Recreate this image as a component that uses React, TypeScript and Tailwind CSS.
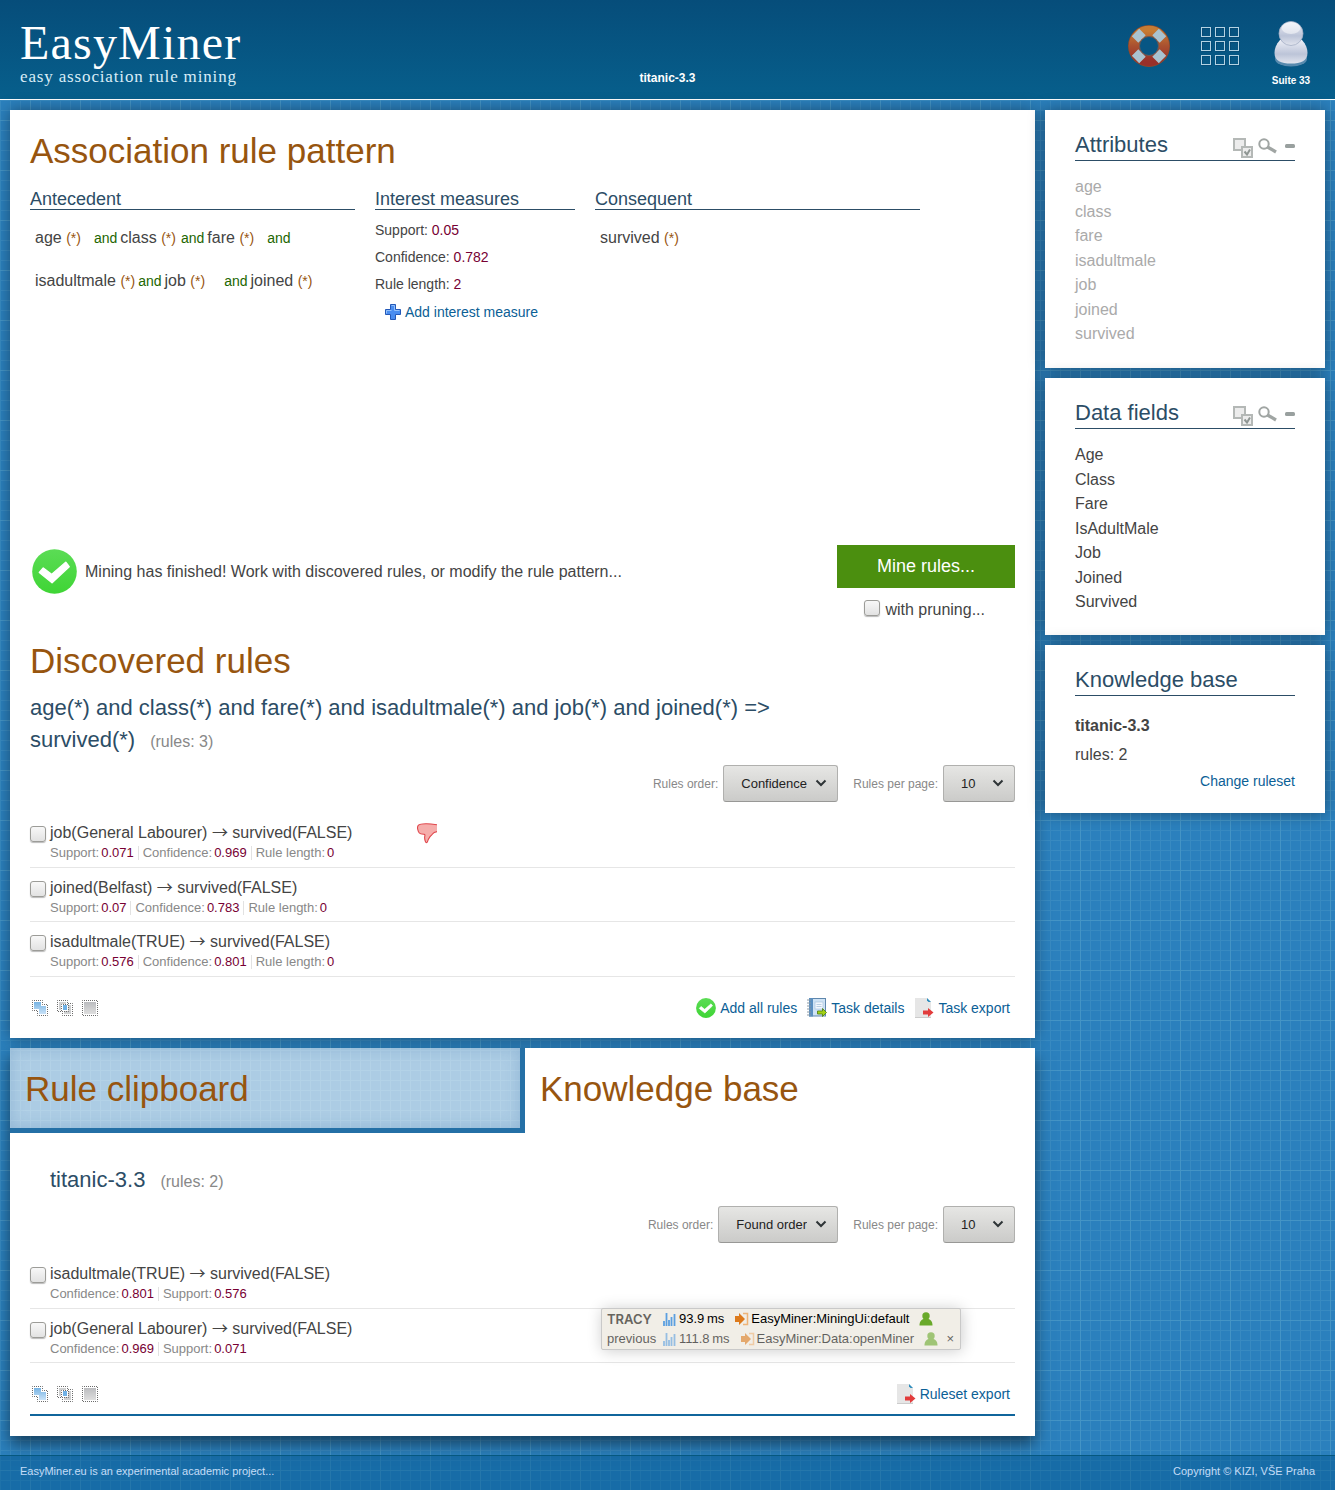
import React from "react";

type Measure = [string, string];

function CheckCircle({ size }: { size: number }) {
  return (
    <svg width={size} height={size} viewBox="0 0 46 46" aria-hidden="true" className="shrink-0">
      <defs>
        <linearGradient id="okFill" x1="0" y1="0" x2="0" y2="1">
          <stop offset="0" stopColor="#5bdc55" />
          <stop offset="1" stopColor="#3fd535" />
        </linearGradient>
      </defs>
      <circle cx="23" cy="23" r="22.8" fill="url(#okFill)" />
      <path d="M7.5 24l4-4.500 8.500 6.500L34.500 13.500l3.500 4.500L20.500 34.500z" fill="#fff" stroke="#fff" strokeWidth="1.500" strokeLinejoin="round" />
    </svg>
  );
}

function LifeRing() {
  return (
    <svg width="44" height="44" viewBox="0 0 44 44" aria-hidden="true">
      <defs>
        <linearGradient id="ring" x1="0" y1="0" x2="0" y2="1">
          <stop offset="0" stopColor="#c67b33" />
          <stop offset="0.500" stopColor="#a95030" />
          <stop offset="1" stopColor="#98302a" />
        </linearGradient>
      </defs>
      <circle cx="22" cy="22" r="15" fill="none" stroke="#8d4a2b" strokeWidth="12" />
      <circle cx="22" cy="22" r="15" fill="none" stroke="url(#ring)" strokeWidth="10.500" />
      <g stroke="#a9c3d0" strokeWidth="10.500">
        <path d="M15 15L8.500 8.500M29 15l6.500-6.500M15 29l-6.500 6.500M29 29l6.500 6.500" />
      </g>
      <circle cx="22" cy="22" r="9.500" fill="#075684" stroke="#6e5a55" strokeWidth="1" />
    </svg>
  );
}

function AppsGrid() {
  const at = [0, 14, 28];
  return (
    <svg width="40" height="40" viewBox="0 0 40 40" aria-hidden="true">
      {at.map((y) =>
        at.map((x) => (
          <g key={`${x}-${y}`} fill="none">
            <rect x={x + 1.5} y={y + 1.5} width="9" height="9" stroke="#03426b" strokeOpacity="0.500" />
            <rect x={x + 0.5} y={y + 0.5} width="9" height="9" stroke="#b4d2e2" />
          </g>
        ))
      )}
    </svg>
  );
}

function UserFigure() {
  return (
    <svg width="36" height="48" viewBox="0 0 36 48" aria-hidden="true">
      <defs>
        <linearGradient id="fig" x1="0" y1="0" x2="0" y2="1">
          <stop offset="0" stopColor="#eceef6" />
          <stop offset="0.600" stopColor="#bcc4d8" />
          <stop offset="1" stopColor="#e2e5ee" />
        </linearGradient>
      </defs>
      <ellipse cx="18" cy="39" rx="16" ry="7.500" fill="#7ba0bf" opacity="0.700" />
      <path d="M7 20h22c4 4 5.500 9 5.500 13 0 8-6.500 10.500-16.500 10.500S1.500 41 1.500 33c0-4 1.500-9 5.500-13z" fill="url(#fig)" />
      <circle cx="18" cy="13.500" r="12" fill="url(#fig)" stroke="#a4aec5" strokeWidth="0.800" />
      <ellipse cx="18" cy="8" rx="9.500" ry="6" fill="#fff" opacity="0.500" />
    </svg>
  );
}

function PlusIcon() {
  return (
    <svg width="16" height="16" viewBox="0 0 16 16" aria-hidden="true">
      <path d="M5.500.5h5v5h5v5h-5v5h-5v-5h-5v-5h5z" fill="#4a8df0" stroke="#2459b8" />
      <path d="M6.500 1.500h3v5h5M1.500 9.500v-3h5" fill="none" stroke="#93c1fb" />
    </svg>
  );
}

function SelectBoxesIcon() {
  return (
    <svg width="20" height="20" viewBox="0 0 20 20" fill="#ececec" stroke="#b4b8b6" strokeWidth="2" aria-hidden="true">
      <rect x="1" y="1" width="11" height="11" />
      <rect x="9" y="9" width="10" height="10" />
      <path d="M11.500 13.500l2.500 3 3-5" fill="none" stroke="#8f9693" />
    </svg>
  );
}

function SearchIcon() {
  return (
    <svg width="20" height="16" viewBox="0 0 20 16" fill="none" stroke="#a0a5a3" aria-hidden="true">
      <circle cx="6" cy="6" r="4.700" strokeWidth="2" />
      <path d="M9.500 9l8.500 5" strokeWidth="3.200" />
    </svg>
  );
}

function MinusIcon() {
  return (
    <svg width="10" height="4" viewBox="0 0 10 4" aria-hidden="true">
      <rect width="10" height="4" rx="1.500" fill="#99a09f" />
    </svg>
  );
}

function ThumbDown() {
  return (
    <svg width="20" height="21" viewBox="0 0 20 21" aria-hidden="true">
      <path
        d="M20 1.800C16 1.200 13 .8 9.500.8 6 .8 3 .7 1.500 2.200.6 3.200.3 5 .8 6.500 1 8 1.500 9 2.300 10c1 1.300 3 1.200 4.700 1.200 1.300.1.900 1.300.7 2.500-.2 1.600 0 3.300.8 5 .3 1.300 1.600 1.300 2-.1.400-1.500.9-2.600 1.900-4 1-1.500 2.300-2.300 3.100-3.600C16.500 9.500 18 9 20 8.600"
        fill="#f5adab" stroke="#e0474c" strokeWidth="1.100"
      />
    </svg>
  );
}

function UnionIcon() {
  return (
    <svg width="16" height="16" viewBox="0 0 16 16" aria-hidden="true">
      <defs>
        <linearGradient id="blueUnion" x1="0" y1="0" x2="0" y2="1">
          <stop offset="0" stopColor="#76b3e3" />
          <stop offset="1" stopColor="#c9e2f8" />
        </linearGradient>
      </defs>
      <path d="M2 2h7v4h5v8H7V9H2z" fill="url(#blueUnion)" />
      <path d="M.5.500h10v4h5v11h-10v-5h-5z" fill="none" stroke="#6b6b6b" strokeDasharray="1 1" strokeDashoffset="0.500" />
    </svg>
  );
}

function IntersectIcon() {
  return (
    <svg width="16" height="16" viewBox="0 0 16 16" aria-hidden="true">
      <path d="M2 2h7v3h5v9H7V10H2z" fill="#cfd0d1" />
      <rect x="4" y="4" width="7" height="7" fill="#fff" />
      <rect x="6" y="5" width="4" height="5" fill="#6fb1e6" />
      <path d="M.5.500h10v3h5v12h-10v-4h-5zM4.500 4.500h7v7h-7z" fill="none" stroke="#6b6b6b" strokeDasharray="1 1" strokeDashoffset="0.500" />
    </svg>
  );
}

function SquareIcon() {
  return (
    <svg width="16" height="16" viewBox="0 0 16 16" aria-hidden="true">
      <defs>
        <linearGradient id="greySquare" x1="0" y1="0" x2="0" y2="1">
          <stop offset="0" stopColor="#bbbcbf" />
          <stop offset="1" stopColor="#dedede" />
        </linearGradient>
      </defs>
      <rect x="2" y="2" width="12" height="12" fill="url(#greySquare)" />
      <rect x="0.500" y="0.500" width="15" height="15" fill="none" stroke="#6b6b6b" strokeDasharray="1 1" strokeDashoffset="0.500" />
    </svg>
  );
}

function NotebookIcon() {
  return (
    <svg width="20" height="20" viewBox="0 0 20 20" aria-hidden="true">
      <rect x="2.500" y="0.500" width="16" height="17.500" fill="#cfe3f5" stroke="#5f87ad" />
      <rect x="2" y="0" width="4" height="18.500" fill="#5b8fc0" />
      <rect x="8" y="4" width="8" height="7" fill="#f3f8fd" stroke="#a8c4de" strokeWidth="0.700" />
      <path d="M9.500 6.500h5M9.500 8.500h5" stroke="#b9cfe4" />
      <path d="M0 2h4M0 5h4M0 8h4M0 11h4M0 14h4M0 17h4" stroke="#8898a5" />
      <path d="M10.500 13h5v-2.500l4 4-4 4V16h-5z" fill="#a3d215" stroke="#558317" strokeWidth="0.900" />
    </svg>
  );
}

function ExportIcon() {
  return (
    <svg width="20" height="20" viewBox="0 0 20 20" aria-hidden="true">
      <path d="M1 0h12l4 4v16H1z" fill="#e6e6e6" />
      <path d="M1 19.500h16" stroke="#cccccc" />
      <path d="M13 0l4 4h-2.500L13 2.500z" fill="#2e8dbd" />
      <path d="M9 12.500h5V10l5.500 4.500L14 19v-2.500H9z" fill="#e23c3c" />
    </svg>
  );
}

function Box({ label, id }: { label?: string; id?: string }) {
  return (
    <input
      type="checkbox"
      id={id}
      aria-label={label}
      className="size-4 shrink-0 appearance-none rounded-[3px] border border-[#9c9c98] bg-linear-to-b from-[#f8f8f8] to-[#e2e2e2] shadow-[0_1px_1px_#bbbbbb] checked:bg-[#2b80bd]"
    />
  );
}

function Picker({ id, label, options }: { id: string; label: string; options: string[] }) {
  return (
    <div className="flex items-center gap-[5px]">
      <label htmlFor={id} className="text-xs text-[#888888]">{label}</label>
      <div className="relative">
        <select
          id={id}
          className="h-[37px] min-w-[72px] appearance-none rounded-[3px] border border-[#b0b0ae] border-b-[#989896] bg-linear-to-b from-[#e6e6e4] to-[#cbcbc9] pr-[30px] pl-[17px] text-[13px] text-[#222222]"
        >
          {options.map((o) => <option key={o}>{o}</option>)}
        </select>
        <svg width="12" height="8" viewBox="0 0 12 8" className="pointer-events-none absolute top-3.5 right-[11px]" aria-hidden="true">
          <path d="M1.500 1.500L6 6l4.500-4.500" fill="none" stroke="#2e3436" strokeWidth="2" />
        </svg>
      </div>
    </div>
  );
}

function RuleRow({ from, to, measures, thumb }: { from: string; to: string; measures: Measure[]; thumb?: boolean }) {
  return (
    <li className="flex items-start gap-1 border-b border-[#e6e6e6] pb-[5px] odd:pb-1.5">
      <span className="flex pt-[13px]"><Box label={`${from} → ${to}`} /></span>
      <div className="min-w-0 pt-2">
        <div className="flex h-6 items-center">
          <span className="text-base leading-6">
            {from} <span className="font-['Noto_Sans_CJK_JP',sans-serif] leading-none">→</span> {to}
          </span>
          {thumb && <span className="ml-[65px]"><ThumbDown /></span>}
        </div>
        <div className="flex items-center gap-1 text-[13px] leading-4">
          {measures.map(([name, value], i) => (
            <React.Fragment key={name}>
              {i > 0 && <span className="h-3.5 w-px bg-[#e2e2e2]" />}
              <span className="flex gap-0.5">
                <span className="text-[#888888]">{name}:</span>
                <span className="text-[#770033]">{value}</span>
              </span>
            </React.Fragment>
          ))}
        </div>
      </div>
    </li>
  );
}

function SelectionTools() {
  return (
    <div className="flex gap-[9px] pl-0.5">
      <button type="button" aria-label="Select all"><UnionIcon /></button>
      <button type="button" aria-label="Invert selection"><IntersectIcon /></button>
      <button type="button" aria-label="Select none"><SquareIcon /></button>
    </div>
  );
}

function ActionLink({ icon, children }: { icon: React.ReactNode; children: React.ReactNode }) {
  return (
    <a href="#" className="flex items-center gap-1 text-sm text-[#0b6096]">
      {icon}
      <span>{children}</span>
    </a>
  );
}

function Attr({ name }: { name: string }) {
  return (
    <span>
      {name} <span className="text-sm text-[#97550f]">(*)</span>
    </span>
  );
}

function And({ children }: { children?: React.ReactNode }) {
  return (
    <span className="flex items-center gap-[3px]">
      <span className="text-sm text-[#226600]">and</span>
      {children}
    </span>
  );
}

function SideTitle({ children, tools }: { children: React.ReactNode; tools?: boolean }) {
  return (
    <div className="flex items-center justify-between border-b border-[#2c4d66]">
      <h2 className="text-[22px] leading-[30px] text-[#2c4d66]">{children}</h2>
      {tools && (
        <div className="flex items-center gap-[5px] pt-0.5">
          <button type="button" aria-label="Select" className="pt-1"><SelectBoxesIcon /></button>
          <button type="button" aria-label="Search"><SearchIcon /></button>
          <button type="button" aria-label="Collapse" className="flex h-4 w-3 items-center justify-end"><MinusIcon /></button>
        </div>
      )}
    </div>
  );
}

function SideList({ items }: { items: string[] }) {
  return (
    <ul className="pt-3.5 text-base leading-6">
      {items.map((i) => <li key={i} className="odd:pb-px">{i}</li>)}
    </ul>
  );
}

function TracyRow({ first, time, action }: { first: React.ReactNode; time: string; action: string }) {
  return (
    <>
      <span className="w-14">{first}</span>
      <svg width="13" height="14" viewBox="0 0 13 14" aria-hidden="true">
        <path d="M1 14V9M3.500 14V1M6 14V8M8.500 14V5M11.500 14V2" stroke="#5b9fe0" strokeWidth="1.800" />
      </svg>
      <span className="ml-[3px]">{time}</span>
      <svg width="14" height="14" viewBox="0 0 14 14" className="ml-[11px]" aria-hidden="true">
        <path d="M0 4h4V1l6 6-6 6v-3H0z" fill="#dd7a1c" />
        <path d="M8 1.500h4.500v11H8" fill="none" stroke="#eeb478" strokeWidth="1.500" />
      </svg>
      <span className="ml-0.5">{action}</span>
      <svg width="14" height="14" viewBox="0 0 14 14" className="ml-2.5" aria-hidden="true">
        <circle cx="7" cy="4" r="3.700" fill="#69a92a" />
        <path d="M.5 13.500c0-4 2-6 4-6.500h5c2 .5 4 2.500 4 6.500z" fill="#69a92a" />
      </svg>
    </>
  );
}

function TracyBar() {
  return (
    <aside className="absolute right-[74px] bottom-[86px] w-[360px] rounded-xs border border-[#c9c9c9] bg-[#f1eee7] text-[13px] leading-5 shadow-[1px_1px_15px_rgba(0,0,0,0.2)]">
      <div className="flex h-5 items-center pl-[5px] text-black">
        <TracyRow
          first={<span className="font-['Inter',sans-serif] font-semibold text-[#66645e]">TRACY</span>}
          time={"93.9\u2009ms"}
          action="EasyMiner:MiningUi:default"
        />
      </div>
      <div className="flex h-5 items-center pl-[5px] text-black opacity-60">
        <TracyRow first="previous" time={"111.8\u2009ms"} action="EasyMiner:Data:openMiner" />
        <button type="button" aria-label="Close" className="ml-auto pr-1.5">×</button>
      </div>
    </aside>
  );
}

const attributes = ["age", "class", "fare", "isadultmale", "job", "joined", "survived"];
const fields = ["Age", "Class", "Fare", "IsAdultMale", "Job", "Joined", "Survived"];

const panel = "bg-white shadow-[0_0_15px_rgba(0,0,0,0.4)]";
const sectionTitle = "border-b border-[#2c4d66] text-lg leading-5 text-[#2c4d66]";

export default function App() {
  return (
    <div className="flex min-h-screen flex-col bg-[#2b80bd] bg-[linear-gradient(#4494c5_1px,transparent_1px),linear-gradient(90deg,#4494c5_1px,transparent_1px),linear-gradient(#388ac1_1px,transparent_1px),linear-gradient(90deg,#388ac1_1px,transparent_1px)] bg-[length:50px_50px,50px_50px,10px_10px,10px_10px] bg-[position:30px_20px] font-['Liberation_Sans',Arial,sans-serif] text-[#444444]">
      <header className="flex items-start justify-between border-b border-white bg-linear-to-b from-[#064d7a] to-[#075f8c] px-5 pb-3 text-white">
        <div className="flex-1 pt-[17px] font-['Liberation_Serif',serif]">
          <div className="text-5xl leading-[52px] tracking-wide">EasyMiner</div>
          <div className="text-[17px] leading-4 tracking-wider text-[#d9edf7]">easy association rule mining</div>
        </div>
        <div className="pt-[70px] text-xs leading-4 font-bold">titanic-3.3</div>
        <nav className="flex flex-1 justify-end">
          <a href="#" aria-label="Help" className="pt-6"><LifeRing /></a>
          <a href="#" aria-label="Applications" className="ml-[30px] pt-[27px]"><AppsGrid /></a>
          <a href="#" className="ml-[26px] flex w-12 flex-col items-center pt-5 text-[10px] leading-3 font-bold whitespace-nowrap">
            <UserFigure />
            <span className="pt-[7px]">Suite 33</span>
          </a>
        </nav>
      </header>

      <div className="flex flex-1 items-start gap-2.5 px-2.5 pt-2.5 pb-[19px]">
        <main className="min-w-0 flex-1">
          <section className={`${panel} p-5`}>
            <h1 className="text-[35px] leading-[42px] text-[#97550f]">Association rule pattern</h1>
            <div className="flex min-h-[353px] items-start gap-5 pt-[17px]">
              <div className="w-[325px]">
                <h2 className={sectionTitle}>Antecedent</h2>
                <div className="pt-1.5 pl-[5px] text-base leading-[43px]">
                  <div className="flex items-center">
                    <span className="mr-[13px]"><Attr name="age" /></span>
                    <span className="mr-[5px]"><And><Attr name="class" /></And></span>
                    <span className="mr-[13px]"><And><Attr name="fare" /></And></span>
                    <And />
                  </div>
                  <div className="flex items-center">
                    <span className="mr-[3px]"><Attr name="isadultmale" /></span>
                    <span className="mr-[19px]"><And><Attr name="job" /></And></span>
                    <And><Attr name="joined" /></And>
                  </div>
                </div>
              </div>
              <div className="w-[200px]">
                <h2 className={sectionTitle}>Interest measures</h2>
                <ul className="pt-[7px] text-sm leading-[27px]">
                  <li>Support: <span className="text-[#770033]">0.05</span></li>
                  <li>Confidence: <span className="text-[#770033]">0.782</span></li>
                  <li>Rule length: <span className="text-[#770033]">2</span></li>
                </ul>
                <div className="flex h-[27px] pl-2.5"><ActionLink icon={<PlusIcon />}>Add interest measure</ActionLink></div>
              </div>
              <div className="w-[325px]">
                <h2 className={sectionTitle}>Consequent</h2>
                <div className="pt-1.5 pl-[5px] text-base leading-[43px]"><Attr name="survived" /></div>
              </div>
            </div>

            <div className="flex items-start justify-between pt-5">
              <div className="flex items-center gap-2 pt-1 pl-0.5">
                <CheckCircle size={45} />
                <p className="text-base">Mining has finished! Work with discovered rules, or modify the rule pattern...</p>
              </div>
              <div className="flex flex-col items-end">
                <button type="button" className="bg-[#4b8f0f] px-10 py-2 text-lg leading-[27px] text-white">Mine rules...</button>
                <div className="flex items-center gap-[5px] pt-1.5 pr-[30px]">
                  <Box id="pruning" />
                  <label htmlFor="pruning" className="pt-1 text-base leading-6">with pruning...</label>
                </div>
              </div>
            </div>

            <h1 className="pt-[18px] text-[35px] leading-[42px] text-[#97550f]">Discovered rules</h1>
            <h2 className="max-w-[740px] pt-2.5 text-[22px] leading-8 text-[#2c4d66]">
              <span>age(*) and class(*) and fare(*) and isadultmale(*) and job(*) and joined(*) =&gt;</span>{" "}
              <span>survived(*)</span>
              <span className="ml-[15px] text-base text-[#888888]">(rules: 3)</span>
            </h2>
            <div className="flex justify-end gap-[15px] pt-[9px]">
              <Picker id="order" label="Rules order:" options={["Confidence"]} />
              <Picker id="per-page" label="Rules per page:" options={["10"]} />
            </div>
            <ul className="pt-[11px]">
              <RuleRow thumb from="job(General Labourer)" to="survived(FALSE)" measures={[["Support", "0.071"], ["Confidence", "0.969"], ["Rule length", "0"]]} />
              <RuleRow from="joined(Belfast)" to="survived(FALSE)" measures={[["Support", "0.07"], ["Confidence", "0.783"], ["Rule length", "0"]]} />
              <RuleRow from="isadultmale(TRUE)" to="survived(FALSE)" measures={[["Support", "0.576"], ["Confidence", "0.801"], ["Rule length", "0"]]} />
            </ul>
            <div className="flex items-center justify-between pt-[21px] pr-[5px]">
              <SelectionTools />
              <div className="flex gap-2.5">
                <ActionLink icon={<CheckCircle size={20} />}>Add all rules</ActionLink>
                <ActionLink icon={<NotebookIcon />}>Task details</ActionLink>
                <ActionLink icon={<ExportIcon />}>Task export</ActionLink>
              </div>
            </div>
          </section>

          <div className="mt-2.5 shadow-[0_8px_15px_rgba(0,0,0,0.5)]">
            <div className="flex items-start gap-[5px] bg-[#2470a6]">
              <a href="#" className="h-20 flex-1 bg-[#accce4] bg-[linear-gradient(#b3d2e7_1px,transparent_1px),linear-gradient(90deg,#b3d2e7_1px,transparent_1px)] bg-[length:10px_10px] bg-[position:0_2px] px-[15px] pt-5 text-[35px] leading-[42px] text-[#97550f] shadow-[inset_0_0_15px_rgba(30,90,150,0.2)]">
                Rule clipboard
              </a>
              <a href="#" className="h-[85px] flex-1 bg-white px-[15px] pt-5 text-[35px] leading-[42px] text-[#97550f]">Knowledge base</a>
            </div>
            <section className="relative bg-white px-5 pt-[31px] pb-5">
              <h2 className="pl-5 text-[22px] leading-8 text-[#2c4d66]">
                titanic-3.3
                <span className="ml-[15px] text-base text-[#888888]">(rules: 2)</span>
              </h2>
              <div className="flex justify-end gap-[15px] pt-2.5">
                <Picker id="kb-order" label="Rules order:" options={["Found order"]} />
                <Picker id="kb-per-page" label="Rules per page:" options={["10"]} />
              </div>
              <ul className="pt-[11px]">
                <RuleRow from="isadultmale(TRUE)" to="survived(FALSE)" measures={[["Confidence", "0.801"], ["Support", "0.576"]]} />
                <RuleRow from="job(General Labourer)" to="survived(FALSE)" measures={[["Confidence", "0.969"], ["Support", "0.071"]]} />
              </ul>
              <div className="flex items-center justify-between border-b-2 border-[#10659c] pt-[21px] pr-[5px] pb-2.5">
                <SelectionTools />
                <ActionLink icon={<ExportIcon />}>Ruleset export</ActionLink>
              </div>
              <TracyBar />
            </section>
          </div>
        </main>

        <aside className="flex w-[280px] shrink-0 flex-col gap-2.5">
          <section className={`${panel} px-[30px] pt-5 pb-[21px] text-[#aaaaaa]`}>
            <SideTitle tools>Attributes</SideTitle>
            <SideList items={attributes} />
          </section>
          <section className={`${panel} px-[30px] pt-5 pb-5`}>
            <SideTitle tools>Data fields</SideTitle>
            <SideList items={fields} />
          </section>
          <section className={`${panel} px-[30px] pt-5 pb-5`}>
            <SideTitle>Knowledge base</SideTitle>
            <div className="pt-[15px] text-base leading-[29px]">
              <div className="font-bold">titanic-3.3</div>
              <div>rules: 2</div>
            </div>
            <div className="text-right text-sm leading-6">
              <a href="#" className="text-[#0b6096]">Change ruleset</a>
            </div>
          </section>
        </aside>
      </div>

      <footer className="flex justify-between border-t border-[#06587f] bg-[#00558c]/45 px-5 pb-1 text-[11px] leading-[30px] text-[#c4dcf7]">
        <span>EasyMiner.eu is an experimental academic project...</span>
        <span>Copyright © KIZI, VŠE Praha</span>
      </footer>
    </div>
  );
}
